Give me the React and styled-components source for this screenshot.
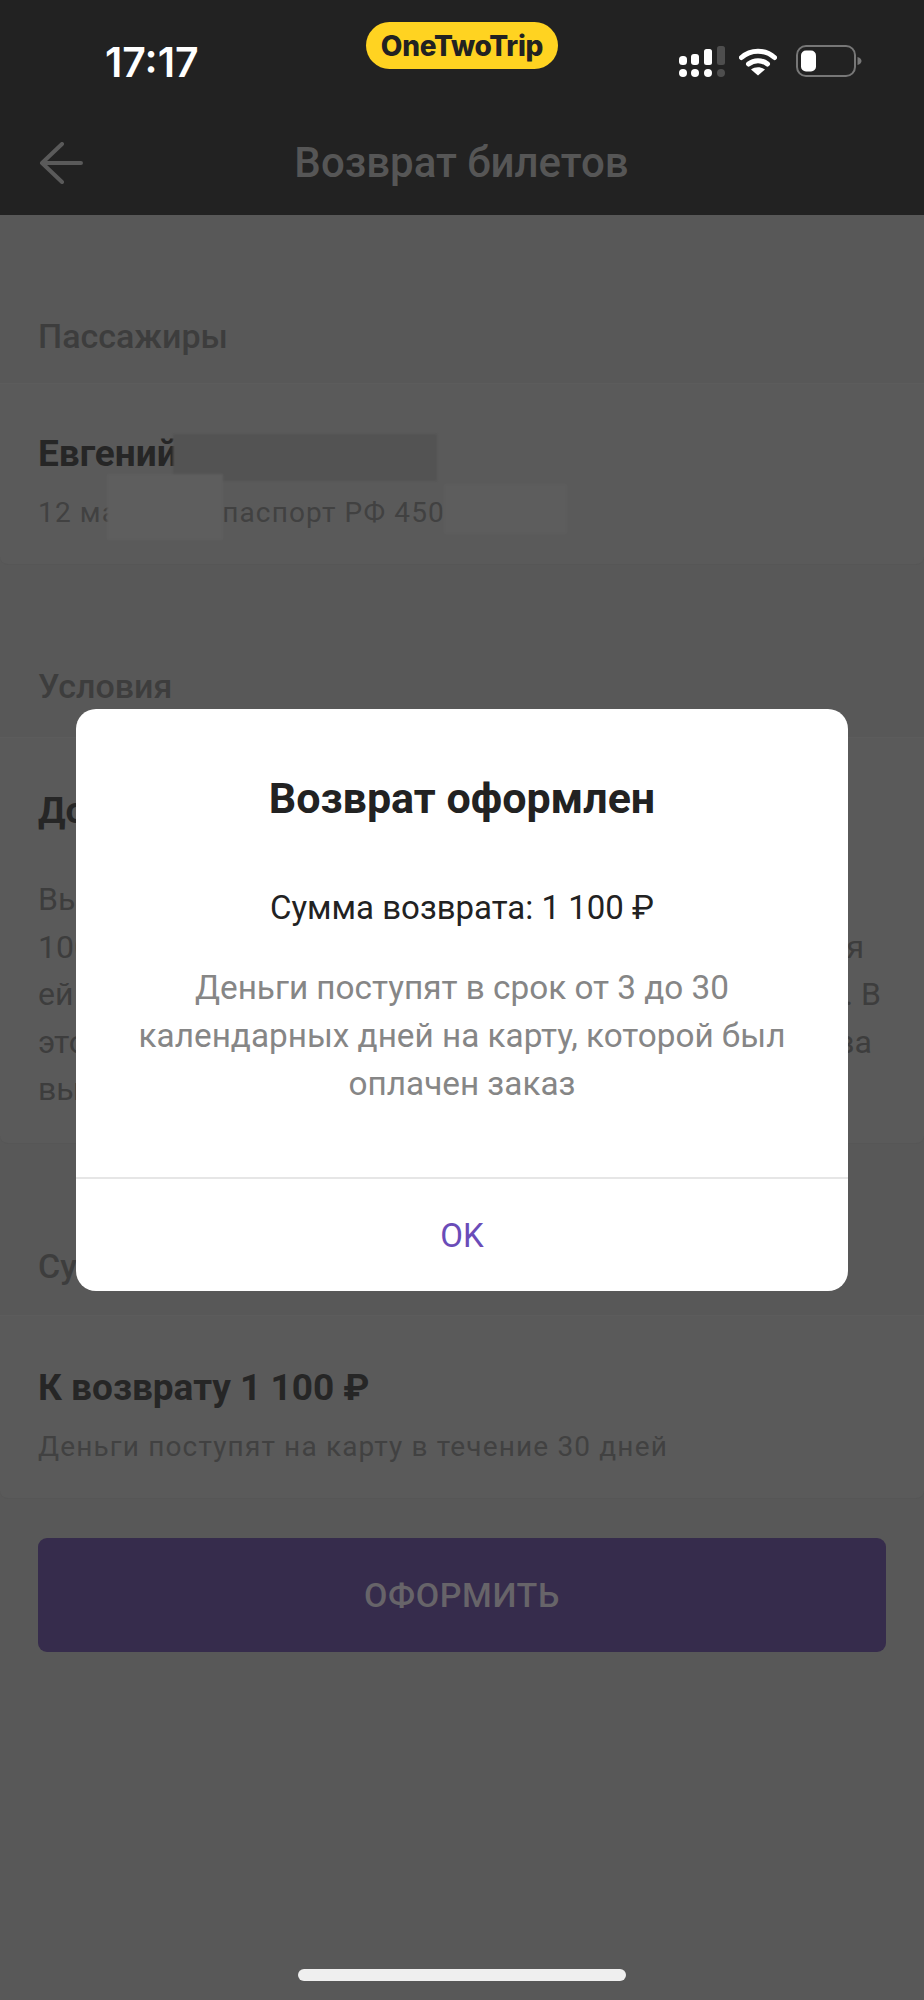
import React from 'react';
import styled, { createGlobalStyle } from 'styled-components';

const App = () => {
    return (
        <Screen>
            <GlobalStyle />
            <Header>
                <StatusBar>
                    <Time>17:17</Time>
                    <Pill>OneTwoTrip</Pill>
                    <StatusIcons>
                        <SignalIcon />
                        <WifiIcon />
                        <BatteryIcon />
                    </StatusIcons>
                </StatusBar>
                <Nav>
                    <BackIcon />
                    <NavTitle>Возврат билетов</NavTitle>
                </Nav>
            </Header>

            <Label $top={97} $bottom={23}>Пассажиры</Label>
            <Card $height={182} $pad={46}>
                <Name>Евгений</Name>
                <Sub $top={15}>12 ма<Gap />паспорт РФ 450</Sub>
                <Smudge $left={173} $top={50} $width={264} $height={47} $tone="#535353" />
                <Smudge $left={107} $top={90} $width={116} $height={66} $tone="#5e5e5e" />
                <Smudge $left={444} $top={100} $width={123} $height={50} $tone="#5d5d5d" />
            </Card>

            <Label $top={97} $bottom={27}>Условия</Label>
            <Card $height={407} $pad={49}>
                <Name>Доступно</Name>
                <Body>
                    <Line><span>Вы</span></Line>
                    <Line $inset={22}><span>100</span><span>я</span></Line>
                    <Line $inset={5}><span>ей</span><span>. В</span></Line>
                    <Line $inset={14}><span>это</span><span>ва</span></Line>
                    <Line><span>вы</span></Line>
                </Body>
            </Card>

            <Label $top={98} $bottom={25}>Сумма</Label>
            <Card $height={184} $pad={48}>
                <Name>К возврату 1 100 ₽</Name>
                <Sub $top={15}>Деньги поступят на карту в течение 30 дней</Sub>
            </Card>

            <SubmitButton>ОФОРМИТЬ</SubmitButton>

            <Overlay>
                <Dialog>
                    <DialogBody>
                        <DialogTitle>Возврат оформлен</DialogTitle>
                        <Amount>Сумма возврата: 1 100 ₽</Amount>
                        <Note>Деньги поступят в срок от 3 до 30 календарных дней на карту, которой был оплачен заказ</Note>
                    </DialogBody>
                    <OkButton>OK</OkButton>
                </Dialog>
            </Overlay>

            <HomeIndicator />
        </Screen>
    )
}

const SignalIcon = () => (
    <svg width="46" height="31" viewBox="0 0 46 31">
        <g fill="#fff">
            <rect x="0" y="10" width="8" height="9" rx="3.5" />
            <rect x="12" y="8" width="8" height="11" rx="3" />
            <rect x="25" y="3" width="8" height="16" rx="2.5" />
            <circle cx="4" cy="27" r="4" />
            <circle cx="16" cy="27" r="4" />
            <circle cx="29" cy="27" r="4" />
        </g>
        <g fill="#4e4e4e">
            <rect x="38" y="0" width="8" height="19" rx="2.5" />
            <circle cx="42" cy="27" r="4" />
        </g>
    </svg>
);

const WifiIcon = () => (
    <svg width="38" height="30" viewBox="0 0 38 30" fill="none">
        <path d="M2.5 11.5C11.5 3 26.5 3 35.5 11.5" stroke="#fff" strokeWidth="5" strokeLinecap="round" />
        <path d="M9.5 18C15 13.5 23 13.5 28.5 18" stroke="#fff" strokeWidth="5" strokeLinecap="round" />
        <path d="M19 29.5L12 23.5C16 20.5 22 20.5 26 23.5Z" fill="#fff" />
    </svg>
);

const BatteryIcon = () => (
    <svg width="66" height="32" viewBox="0 0 66 32" fill="none">
        <rect x="1" y="1" width="58" height="30" rx="9" stroke="#777" strokeWidth="2" />
        <rect x="5" y="5.5" width="15" height="21" rx="5" fill="#fff" />
        <path d="M61.5 12C64.5 13 65.5 14.5 65.5 16C65.5 17.5 64.5 19 61.5 20Z" fill="#777" />
    </svg>
);

const BackIcon = () => (
    <svg width="44" height="42" viewBox="0 0 44 42" fill="none">
        <path d="M23 2L3 21L23 40M3 21H42" stroke="#5a5a5a" strokeWidth="4" strokeLinecap="round" strokeLinejoin="round" />
    </svg>
);

const GlobalStyle = createGlobalStyle`
    html, body {
        margin: 0;
        padding: 0;
        background: #585858;
    }

    * {
        box-sizing: border-box;
    }
`;

const Screen = styled.div`
    width: 924px;
    height: 2000px;
    position: relative;
    overflow: hidden;
    background-color: #585858;
    font-family: Roboto, "Liberation Sans", sans-serif;
`;

const Header = styled.header`
    height: 215px;
    background-color: #222222;
`;

const StatusBar = styled.div`
    height: 100px;
    padding: 22px 62px 0;
    display: grid;
    grid-template-columns: 1fr auto 1fr;
    align-items: start;
`;

const Time = styled.div`
    margin: 17px 0 0 43px;
    font-family: Inter, sans-serif;
    font-size: 41px;
    line-height: 46px;
    font-weight: 600;
    color: #fff;
`;

const Pill = styled.div`
    width: 192px;
    height: 47px;
    border-radius: 24px;
    background-color: #ffd321;
    display: flex;
    justify-content: center;
    align-items: center;
    font-family: Inter, sans-serif;
    font-size: 28px;
    font-weight: 800;
    letter-spacing: -0.3px;
    color: #222;
`;

const StatusIcons = styled.div`
    margin-top: 23px;
    display: flex;
    justify-content: flex-end;
    align-items: center;
    gap: 14px;

    svg:nth-child(3) {
        margin-left: 5px;
    }
`;

const Nav = styled.nav`
    height: 115px;
    padding: 10px 40px 0 39px;
    display: grid;
    grid-template-columns: 44px 1fr 44px;
    align-items: center;
`;

const NavTitle = styled.h1`
    margin: 0;
    text-align: center;
    font-size: 42px;
    font-weight: 500;
    color: #565656;
`;

const Label = styled.div`
    padding: ${props => props.$top}px 38px ${props => props.$bottom}px;
    font-size: 34px;
    line-height: 48px;
    font-weight: 500;
    color: #3d3d3d;
`;

const Card = styled.section`
    height: ${props => props.$height}px;
    padding: ${props => props.$pad}px 38px 0;
    position: relative;
    background-color: #5a5a5a;
    border-top: 1px solid #5c5c5c;
    border-bottom: 1px solid #565656;
    border-radius: 0 0 8px 8px;
`;

const Name = styled.div`
    font-size: 37px;
    line-height: 48px;
    font-weight: 700;
    color: #262626;
`;

const Sub = styled.div`
    margin-top: ${props => props.$top}px;
    font-size: 28px;
    line-height: 40px;
    letter-spacing: 1.15px;
    color: #414141;
    white-space: nowrap;
`;

const Gap = styled.span`
    display: inline-block;
    width: 104px;
`;

const Smudge = styled.div`
    position: absolute;
    left: ${props => props.$left}px;
    top: ${props => props.$top}px;
    width: ${props => props.$width}px;
    height: ${props => props.$height}px;
    background-color: ${props => props.$tone};
    filter: blur(1px);
`;

const Body = styled.div`
    margin-top: 41px;
`;

const Line = styled.div`
    display: flex;
    justify-content: space-between;
    padding-right: ${props => props.$inset || 0}px;
    font-size: 32px;
    line-height: 47.5px;
    color: #3d3d3d;
`;

const SubmitButton = styled.button`
    display: block;
    width: 848px;
    height: 114px;
    margin: 39px 0 0 38px;
    border: none;
    border-radius: 9px;
    background-color: #362c4c;
    font-family: Roboto, sans-serif;
    font-size: 34px;
    font-weight: 500;
    letter-spacing: 0.6px;
    color: #676469;
`;

const Overlay = styled.div`
    position: absolute;
    inset: 0;
    padding-top: 709px;
    display: flex;
    justify-content: center;
    align-items: flex-start;
`;

const Dialog = styled.div`
    width: 772px;
    height: 582px;
    border-radius: 20px;
    background-color: #fff;
    display: flex;
    flex-direction: column;
    overflow: hidden;
`;

const DialogBody = styled.div`
    height: 470px;
    padding: 63px 50px 0;
    text-align: center;
    border-bottom: 2px solid #e6e6e6;
`;

const DialogTitle = styled.h2`
    margin: 0;
    font-size: 43px;
    line-height: 52px;
    font-weight: 700;
    color: #222;
`;

const Amount = styled.div`
    margin-top: 64px;
    font-size: 33px;
    line-height: 40px;
    color: #222;
`;

const Note = styled.p`
    margin: 36px 0 0;
    font-size: 33.3px;
    line-height: 48px;
    color: #868686;
`;

const OkButton = styled.button`
    flex: 1;
    border: none;
    background: none;
    font-family: Roboto, sans-serif;
    font-size: 33px;
    color: #6a4cb8;
`;

const HomeIndicator = styled.div`
    position: absolute;
    left: 298px;
    top: 1969px;
    width: 328px;
    height: 12px;
    border-radius: 6px;
    background-color: #efefef;
`;

export default App;
